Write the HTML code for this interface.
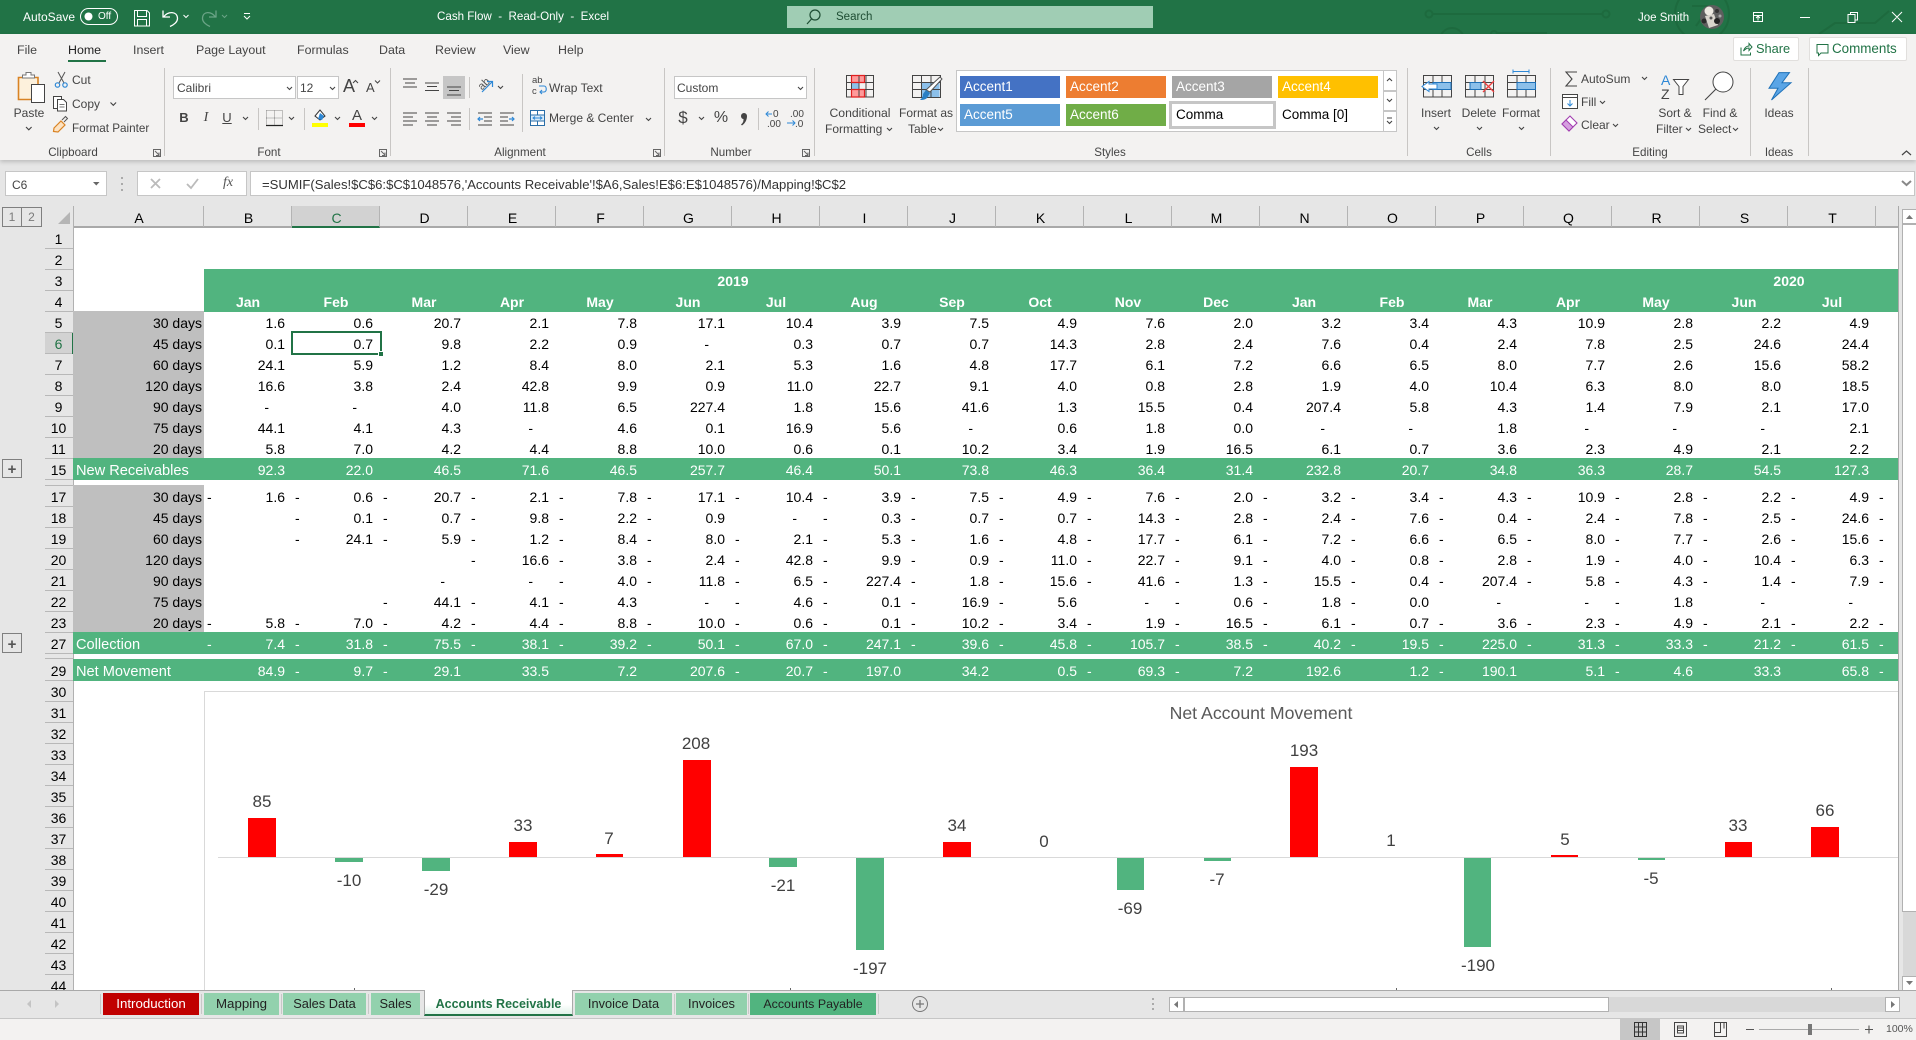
<!DOCTYPE html>
<html><head><meta charset="utf-8"><title>Cash Flow</title>
<style>
html,body{margin:0;padding:0;width:1916px;height:1040px;overflow:hidden;background:#e6e6e6;font-family:"Liberation Sans",sans-serif;font-size:12px;color:#444}
div,span{box-sizing:border-box}
.abs{position:absolute}
.t{position:absolute;white-space:nowrap;line-height:16px;color:#444}
.c{transform:translateX(-50%)}
.tb{color:#fff}
.r{position:absolute;left:204px;width:1694px;height:21px;display:grid;grid-template-columns:repeat(20,88px);overflow:hidden;font-size:14px;color:#000}
.r u{display:block;position:relative;text-decoration:none;text-align:right;padding-right:7px;line-height:24px;height:21px}
.r i{position:absolute;left:3px;top:0;font-style:normal}
.r u.z{padding-right:23px}
.r.g{background:#51b47f;color:#fff;height:22px}
.a{position:absolute;left:73px;width:131px;height:21px;font-size:14px;line-height:24px;text-align:right;padding-right:2px;color:#000;background:#bfbfbf}
.a.g{background:#51b47f;color:#fff;text-align:left;padding-left:3px;height:22px;font-size:14.6px;line-height:26px;overflow:hidden}
.n{position:absolute;left:45px;width:28px;height:21px;font-size:14px;line-height:22px;text-align:center;color:#000;border-bottom:1px solid #b8b8b8;background:#e6e6e6;padding-right:1px}
.m{position:absolute;top:290px;width:88px;text-align:center;color:#fff;font-weight:bold;font-size:14px;line-height:24px}
.ch{position:absolute;top:206px;height:21px;width:88px;text-align:center;font-size:14px;line-height:24px;color:#000;border-right:1px solid #b4b4b4;padding-left:2px}
.sw{position:absolute;height:22px;color:#fff;font-size:13.5px;line-height:22px;padding-left:4px}
.tab{position:absolute;top:993px;height:22px;background:#92d1ad;color:#222;text-align:center;line-height:22px;font-size:12.8px}
</style></head><body>

<!-- title bar -->
<div class="abs" style="left:0;top:0;width:1916px;height:34px;background:#217346"></div>
<svg class="abs" style="left:0;top:0" width="1916" height="34" viewBox="0 0 1916 34">
<g fill="none" stroke="#1d6a3e" stroke-width="2">
<circle cx="1429" cy="14" r="3.500"/><path d="M1433 14H1602"/><circle cx="1606" cy="14" r="3.500"/><circle cx="1702" cy="14" r="27"/><path d="M1692 6h18l-14 20"/><circle cx="1452" cy="40" r="12"/><circle cx="1494" cy="34" r="3"/><path d="M1497 33h50M1819 34l16-11h40l14-12"/>
</g>
</svg>
<!-- ribbon -->
<div class="abs" style="left:0;top:34px;width:1916px;height:126px;background:#f3f2f1;box-shadow:0 2px 4px rgba(0,0,0,.18)"></div>
<div class="abs" style="left:787px;top:6px;width:366px;height:22px;background:#a0cdb4"></div>

<div class="t tb" style="left:23px;top:9px;font-size:12px">AutoSave</div>
<div class="t tb" style="left:98px;top:9px;font-size:10px">Off</div>
<div class="t tb" style="left:437px;top:9px;font-size:11.6px">Cash Flow&nbsp; -&nbsp; Read-Only&nbsp; -&nbsp; Excel</div>
<div class="t" style="left:836px;top:9px;color:#1e4d33;font-size:11.5px">Search</div>
<div class="t tb" style="left:1638px;top:10px;font-size:11.5px">Joe Smith</div>

<!-- tabs -->
<div class="t" style="left:17px;top:42px;font-size:12.4px">File</div>
<div class="t" style="left:68px;top:42px;font-size:12.4px;color:#222">Home</div>
<div class="abs" style="left:68px;top:60px;width:38px;height:2px;background:#217346"></div>
<div class="t" style="left:133px;top:42px;font-size:12.4px">Insert</div>
<div class="t" style="left:196px;top:42px;font-size:12.4px">Page Layout</div>
<div class="t" style="left:297px;top:42px;font-size:12.4px">Formulas</div>
<div class="t" style="left:379px;top:42px;font-size:12.4px">Data</div>
<div class="t" style="left:435px;top:42px;font-size:12.4px">Review</div>
<div class="t" style="left:503px;top:42px;font-size:12.4px">View</div>
<div class="t" style="left:558px;top:42px;font-size:12.4px">Help</div>

<div class="abs" style="left:1733px;top:37px;width:66px;height:24px;background:#fff;border:1px solid #e1dfdd;border-radius:2px"></div>
<div class="t" style="left:1756px;top:41px;color:#217346;font-size:12.8px">Share</div>
<div class="abs" style="left:1809px;top:37px;width:98px;height:24px;background:#fff;border:1px solid #e1dfdd;border-radius:2px"></div>
<div class="t" style="left:1832px;top:41px;color:#217346;font-size:13.4px">Comments</div>

<!-- group labels -->
<div class="t c" style="left:73px;top:145px;font-size:11.6px">Clipboard</div>
<div class="t c" style="left:269px;top:145px;font-size:11.6px">Font</div>
<div class="t c" style="left:520px;top:145px;font-size:11.6px">Alignment</div>
<div class="t c" style="left:731px;top:145px;font-size:11.6px">Number</div>
<div class="t c" style="left:1110px;top:145px;font-size:11.6px">Styles</div>
<div class="t c" style="left:1479px;top:145px;font-size:11.6px">Cells</div>
<div class="t c" style="left:1650px;top:145px;font-size:11.6px">Editing</div>
<div class="t c" style="left:1779px;top:145px;font-size:11.6px">Ideas</div>

<!-- clipboard -->
<div class="t c" style="left:29px;top:105px">Paste</div>
<div class="t" style="left:72px;top:72px">Cut</div>
<div class="t" style="left:72px;top:96px">Copy</div>
<div class="t" style="left:72px;top:121px;font-size:11.7px">Format Painter</div>

<!-- font group -->
<div class="abs" style="left:173px;top:76px;width:123px;height:23px;background:#fff;border:1px solid #c6c6c6"></div>
<div class="abs" style="left:297px;top:76px;width:42px;height:23px;background:#fff;border:1px solid #c6c6c6"></div>
<div class="t" style="left:177px;top:80px">Calibri</div>
<div class="t" style="left:300px;top:80px">12</div>
<div class="t" style="left:343px;top:76px;font-size:18px;line-height:20px">A</div>
<div class="t" style="left:366px;top:78px;font-size:13px;line-height:20px">A</div>
<div class="t c" style="left:184px;top:110px;font-weight:bold;font-size:13px">B</div>
<div class="t c" style="left:206px;top:110px;font-style:italic;font-family:'Liberation Serif',serif;font-size:14px">I</div>
<div class="t c" style="left:227px;top:110px;text-decoration:underline;font-size:13px">U</div>
<div class="t c" style="left:357px;top:108px;font-size:15px">A</div>

<!-- alignment -->
<div class="abs" style="left:443px;top:76px;width:22px;height:23px;background:#c6c6c6"></div>
<div class="t" style="left:549px;top:80px">Wrap Text</div>
<div class="t" style="left:549px;top:110px">Merge &amp; Center</div>

<!-- number -->
<div class="abs" style="left:674px;top:76px;width:133px;height:23px;background:#fff;border:1px solid #c6c6c6"></div>
<div class="t" style="left:677px;top:80px">Custom</div>
<div class="t c" style="left:683px;top:109px;font-size:17px;line-height:18px">$</div>
<div class="t c" style="left:721px;top:109px;font-size:16px;line-height:18px">%</div>

<!-- styles button text -->
<div class="t c" style="left:860px;top:105px;font-size:12.2px">Conditional</div>
<div class="t" style="left:825px;top:121px">Formatting</div>
<div class="t c" style="left:926px;top:105px">Format as</div>
<div class="t" style="left:908px;top:121px">Table</div>

<div class="abs" style="left:956px;top:70px;width:441px;height:62px;background:#fff;border:1px solid #c6c6c6"></div>
<div class="sw" style="left:960px;top:76px;width:100px;background:#4472c4">Accent1</div>
<div class="sw" style="left:1066px;top:76px;width:100px;background:#ed7d31">Accent2</div>
<div class="sw" style="left:1172px;top:76px;width:100px;background:#a5a5a5">Accent3</div>
<div class="sw" style="left:1278px;top:76px;width:100px;background:#ffc000">Accent4</div>
<div class="sw" style="left:960px;top:104px;width:100px;background:#5b9bd5">Accent5</div>
<div class="sw" style="left:1066px;top:104px;width:100px;background:#70ad47">Accent6</div>
<div class="abs" style="left:1169px;top:101px;width:107px;height:28px;background:#fff;border:3px solid #c6c6c6"></div>
<div class="sw" style="left:1172px;top:104px;color:#000">Comma</div>
<div class="sw" style="left:1278px;top:104px;color:#000">Comma [0]</div>
<div class="abs" style="left:1383px;top:70px;width:14px;height:21px;background:#fff;border:1px solid #c6c6c6"></div>
<div class="abs" style="left:1383px;top:91px;width:14px;height:20px;background:#fff;border:1px solid #c6c6c6"></div>
<div class="abs" style="left:1383px;top:111px;width:14px;height:21px;background:#fff;border:1px solid #c6c6c6"></div>

<!-- cells -->
<div class="t c" style="left:1436px;top:105px">Insert</div>
<div class="t c" style="left:1479px;top:105px">Delete</div>
<div class="t c" style="left:1521px;top:105px">Format</div>
<!-- editing -->
<div class="t" style="left:1581px;top:71px">AutoSum</div>
<div class="t" style="left:1581px;top:94px">Fill</div>
<div class="t" style="left:1581px;top:117px">Clear</div>
<div class="t c" style="left:1675px;top:105px">Sort &amp;</div>
<div class="t" style="left:1656px;top:121px">Filter</div>
<div class="t c" style="left:1720px;top:105px">Find &amp;</div>
<div class="t" style="left:1698px;top:121px">Select</div>
<div class="t c" style="left:1779px;top:105px">Ideas</div>

<!-- formula bar -->
<div class="abs" style="left:5px;top:171px;width:102px;height:25px;background:#fff;border:1px solid #c6c6c6"></div>
<div class="t" style="left:12px;top:177px;font-size:12px">C6</div>
<div class="abs" style="left:137px;top:171px;width:110px;height:25px;background:#fff;border:1px solid #c6c6c6"></div>
<div class="abs" style="left:250px;top:171px;width:1665px;height:25px;background:#fff;border:1px solid #c6c6c6"></div>
<div class="t" style="left:262px;top:177px;color:#333;font-size:13.1px">=SUMIF(Sales!$C$6:$C$1048576,'Accounts Receivable'!$A6,Sales!E$6:E$1048576)/Mapping!$C$2</div>
<div class="t c" style="left:228px;top:175px;font-family:'Liberation Serif',serif;font-style:italic;font-size:14px;color:#555">fx</div>

<!-- outline buttons -->
<div class="abs" style="left:2px;top:207px;width:20px;height:20px;border:1px solid #7f7f7f;text-align:center;line-height:19px;color:#7a7a7a;font-size:12px">1</div>
<div class="abs" style="left:22px;top:207px;width:20px;height:20px;border:1px solid #7f7f7f;border-left:0;text-align:center;line-height:19px;color:#7a7a7a;font-size:12px">2</div>
<div class="abs" style="left:2px;top:459px;width:20px;height:19px;border:1px solid #7f7f7f;text-align:center;line-height:20px;color:#555;font-size:15px;font-weight:bold;overflow:hidden">+</div>
<div class="abs" style="left:2px;top:633px;width:20px;height:20px;border:1px solid #7f7f7f;text-align:center;line-height:21px;color:#555;font-size:15px;font-weight:bold;overflow:hidden">+</div>

<!-- sheet -->
<div class="abs" style="left:73px;top:227px;width:1825px;height:763px;background:#fff"></div>
<div class="abs" style="left:73px;top:206px;width:1825px;height:21px;background:#e6e6e6"></div>
<div class="abs" style="left:73px;top:226px;width:1826px;height:2px;background:#a9a9a9"></div>
<div class="abs" style="left:73px;top:206px;width:1px;height:784px;background:#b1b1b1"></div>
<div class="abs" style="left:1898px;top:206px;width:1px;height:784px;background:#a9a9a9"></div>

<!-- column headers -->
<div class="ch" style="left:73px;width:131px">A</div>
<div class="ch" style="left:204px">B</div>
<div class="ch" style="left:292px;background:#d2d2d2;color:#217346;border-bottom:2px solid #217346;height:22px">C</div>
<div class="ch" style="left:380px">D</div>
<div class="ch" style="left:468px">E</div>
<div class="ch" style="left:556px">F</div>
<div class="ch" style="left:644px">G</div>
<div class="ch" style="left:732px">H</div>
<div class="ch" style="left:820px">I</div>
<div class="ch" style="left:908px">J</div>
<div class="ch" style="left:996px">K</div>
<div class="ch" style="left:1084px">L</div>
<div class="ch" style="left:1172px">M</div>
<div class="ch" style="left:1260px">N</div>
<div class="ch" style="left:1348px">O</div>
<div class="ch" style="left:1436px">P</div>
<div class="ch" style="left:1524px">Q</div>
<div class="ch" style="left:1612px">R</div>
<div class="ch" style="left:1700px">S</div>
<div class="ch" style="left:1788px">T</div>

<!-- row numbers -->
<div class="n" style="top:228px">1</div><div class="n" style="top:249px">2</div><div class="n" style="top:270px">3</div><div class="n" style="top:291px">4</div><div class="n" style="top:312px">5</div>
<div class="n" style="top:333px;background:#d2d2d2;color:#217346">6</div>
<div class="n" style="top:354px">7</div><div class="n" style="top:375px">8</div><div class="n" style="top:396px">9</div><div class="n" style="top:417px">10</div><div class="n" style="top:438px">11</div>
<div class="n" style="top:459px">15</div>
<div class="n" style="top:480px;height:6px"></div>
<div class="n" style="top:486px">17</div><div class="n" style="top:507px">18</div><div class="n" style="top:528px">19</div><div class="n" style="top:549px">20</div><div class="n" style="top:570px">21</div><div class="n" style="top:591px">22</div><div class="n" style="top:612px">23</div>
<div class="n" style="top:633px">27</div>
<div class="n" style="top:654px;height:5px"></div>
<div class="n" style="top:660px">29</div>
<div class="n" style="top:681px">30</div><div class="n" style="top:702px">31</div><div class="n" style="top:723px">32</div><div class="n" style="top:744px">33</div><div class="n" style="top:765px">34</div><div class="n" style="top:786px">35</div><div class="n" style="top:807px">36</div><div class="n" style="top:828px">37</div><div class="n" style="top:849px">38</div><div class="n" style="top:870px">39</div><div class="n" style="top:891px">40</div><div class="n" style="top:912px">41</div><div class="n" style="top:933px">42</div><div class="n" style="top:954px">43</div><div class="n" style="top:975px;height:15px;overflow:hidden;border:0">44</div>
<div class="abs" style="left:72px;top:333px;width:2px;height:21px;background:#217346"></div>

<!-- header band -->
<div class="abs" style="left:204px;top:269px;width:1694px;height:43px;background:#51b47f"></div>
<div class="m" style="left:689px;top:269px">2019</div>
<div class="m" style="left:1745px;top:269px">2020</div>
<div class="m" style="left:204px">Jan</div><div class="m" style="left:292px">Feb</div><div class="m" style="left:380px">Mar</div><div class="m" style="left:468px">Apr</div><div class="m" style="left:556px">May</div><div class="m" style="left:644px">Jun</div><div class="m" style="left:732px">Jul</div><div class="m" style="left:820px">Aug</div><div class="m" style="left:908px">Sep</div><div class="m" style="left:996px">Oct</div><div class="m" style="left:1084px">Nov</div><div class="m" style="left:1172px">Dec</div><div class="m" style="left:1260px">Jan</div><div class="m" style="left:1348px">Feb</div><div class="m" style="left:1436px">Mar</div><div class="m" style="left:1524px">Apr</div><div class="m" style="left:1612px">May</div><div class="m" style="left:1700px">Jun</div><div class="m" style="left:1788px">Jul</div>

<!-- section 1 -->
<div class="a" style="top:311px">30 days</div><div class="a" style="top:332px">45 days</div><div class="a" style="top:353px">60 days</div><div class="a" style="top:374px">120 days</div><div class="a" style="top:395px">90 days</div><div class="a" style="top:416px">75 days</div><div class="a" style="top:437px">20 days</div>
<div class="r" style="top:311px"><u>1.6</u><u>0.6</u><u>20.7</u><u>2.1</u><u>7.8</u><u>17.1</u><u>10.4</u><u>3.9</u><u>7.5</u><u>4.9</u><u>7.6</u><u>2.0</u><u>3.2</u><u>3.4</u><u>4.3</u><u>10.9</u><u>2.8</u><u>2.2</u><u>4.9</u></div>
<div class="r" style="top:332px"><u>0.1</u><u>0.7</u><u>9.8</u><u>2.2</u><u>0.9</u><u class="z">-</u><u>0.3</u><u>0.7</u><u>0.7</u><u>14.3</u><u>2.8</u><u>2.4</u><u>7.6</u><u>0.4</u><u>2.4</u><u>7.8</u><u>2.5</u><u>24.6</u><u>24.4</u></div>
<div class="r" style="top:353px"><u>24.1</u><u>5.9</u><u>1.2</u><u>8.4</u><u>8.0</u><u>2.1</u><u>5.3</u><u>1.6</u><u>4.8</u><u>17.7</u><u>6.1</u><u>7.2</u><u>6.6</u><u>6.5</u><u>8.0</u><u>7.7</u><u>2.6</u><u>15.6</u><u>58.2</u></div>
<div class="r" style="top:374px"><u>16.6</u><u>3.8</u><u>2.4</u><u>42.8</u><u>9.9</u><u>0.9</u><u>11.0</u><u>22.7</u><u>9.1</u><u>4.0</u><u>0.8</u><u>2.8</u><u>1.9</u><u>4.0</u><u>10.4</u><u>6.3</u><u>8.0</u><u>8.0</u><u>18.5</u></div>
<div class="r" style="top:395px"><u class="z">-</u><u class="z">-</u><u>4.0</u><u>11.8</u><u>6.5</u><u>227.4</u><u>1.8</u><u>15.6</u><u>41.6</u><u>1.3</u><u>15.5</u><u>0.4</u><u>207.4</u><u>5.8</u><u>4.3</u><u>1.4</u><u>7.9</u><u>2.1</u><u>17.0</u></div>
<div class="r" style="top:416px"><u>44.1</u><u>4.1</u><u>4.3</u><u class="z">-</u><u>4.6</u><u>0.1</u><u>16.9</u><u>5.6</u><u class="z">-</u><u>0.6</u><u>1.8</u><u>0.0</u><u class="z">-</u><u class="z">-</u><u>1.8</u><u class="z">-</u><u class="z">-</u><u class="z">-</u><u>2.1</u></div>
<div class="r" style="top:437px"><u>5.8</u><u>7.0</u><u>4.2</u><u>4.4</u><u>8.8</u><u>10.0</u><u>0.6</u><u>0.1</u><u>10.2</u><u>3.4</u><u>1.9</u><u>16.5</u><u>6.1</u><u>0.7</u><u>3.6</u><u>2.3</u><u>4.9</u><u>2.1</u><u>2.2</u></div>

<div class="a g" style="top:458px">New Receivables</div>
<div class="r g" style="top:458px"><u>92.3</u><u>22.0</u><u>46.5</u><u>71.6</u><u>46.5</u><u>257.7</u><u>46.4</u><u>50.1</u><u>73.8</u><u>46.3</u><u>36.4</u><u>31.4</u><u>232.8</u><u>20.7</u><u>34.8</u><u>36.3</u><u>28.7</u><u>54.5</u><u>127.3</u></div>

<!-- section 2 -->
<div class="a" style="top:485px">30 days</div><div class="a" style="top:506px">45 days</div><div class="a" style="top:527px">60 days</div><div class="a" style="top:548px">120 days</div><div class="a" style="top:569px">90 days</div><div class="a" style="top:590px">75 days</div><div class="a" style="top:611px">20 days</div>
<div class="r" style="top:485px"><u><i>-</i>1.6</u><u><i>-</i>0.6</u><u><i>-</i>20.7</u><u><i>-</i>2.1</u><u><i>-</i>7.8</u><u><i>-</i>17.1</u><u><i>-</i>10.4</u><u><i>-</i>3.9</u><u><i>-</i>7.5</u><u><i>-</i>4.9</u><u><i>-</i>7.6</u><u><i>-</i>2.0</u><u><i>-</i>3.2</u><u><i>-</i>3.4</u><u><i>-</i>4.3</u><u><i>-</i>10.9</u><u><i>-</i>2.8</u><u><i>-</i>2.2</u><u><i>-</i>4.9</u><u><i>-</i></u></div>
<div class="r" style="top:506px"><u></u><u><i>-</i>0.1</u><u><i>-</i>0.7</u><u><i>-</i>9.8</u><u><i>-</i>2.2</u><u><i>-</i>0.9</u><u class="z">-</u><u><i>-</i>0.3</u><u><i>-</i>0.7</u><u><i>-</i>0.7</u><u><i>-</i>14.3</u><u><i>-</i>2.8</u><u><i>-</i>2.4</u><u><i>-</i>7.6</u><u><i>-</i>0.4</u><u><i>-</i>2.4</u><u><i>-</i>7.8</u><u><i>-</i>2.5</u><u><i>-</i>24.6</u><u><i>-</i></u></div>
<div class="r" style="top:527px"><u></u><u><i>-</i>24.1</u><u><i>-</i>5.9</u><u><i>-</i>1.2</u><u><i>-</i>8.4</u><u><i>-</i>8.0</u><u><i>-</i>2.1</u><u><i>-</i>5.3</u><u><i>-</i>1.6</u><u><i>-</i>4.8</u><u><i>-</i>17.7</u><u><i>-</i>6.1</u><u><i>-</i>7.2</u><u><i>-</i>6.6</u><u><i>-</i>6.5</u><u><i>-</i>8.0</u><u><i>-</i>7.7</u><u><i>-</i>2.6</u><u><i>-</i>15.6</u><u><i>-</i></u></div>
<div class="r" style="top:548px"><u></u><u></u><u></u><u><i>-</i>16.6</u><u><i>-</i>3.8</u><u><i>-</i>2.4</u><u><i>-</i>42.8</u><u><i>-</i>9.9</u><u><i>-</i>0.9</u><u><i>-</i>11.0</u><u><i>-</i>22.7</u><u><i>-</i>9.1</u><u><i>-</i>4.0</u><u><i>-</i>0.8</u><u><i>-</i>2.8</u><u><i>-</i>1.9</u><u><i>-</i>4.0</u><u><i>-</i>10.4</u><u><i>-</i>6.3</u><u><i>-</i></u></div>
<div class="r" style="top:569px"><u></u><u></u><u class="z">-</u><u class="z">-</u><u><i>-</i>4.0</u><u><i>-</i>11.8</u><u><i>-</i>6.5</u><u><i>-</i>227.4</u><u><i>-</i>1.8</u><u><i>-</i>15.6</u><u><i>-</i>41.6</u><u><i>-</i>1.3</u><u><i>-</i>15.5</u><u><i>-</i>0.4</u><u><i>-</i>207.4</u><u><i>-</i>5.8</u><u><i>-</i>4.3</u><u><i>-</i>1.4</u><u><i>-</i>7.9</u><u><i>-</i></u></div>
<div class="r" style="top:590px"><u></u><u></u><u><i>-</i>44.1</u><u><i>-</i>4.1</u><u><i>-</i>4.3</u><u class="z">-</u><u><i>-</i>4.6</u><u><i>-</i>0.1</u><u><i>-</i>16.9</u><u><i>-</i>5.6</u><u class="z">-</u><u><i>-</i>0.6</u><u><i>-</i>1.8</u><u><i>-</i>0.0</u><u class="z">-</u><u class="z">-</u><u><i>-</i>1.8</u><u class="z">-</u><u class="z">-</u></div>
<div class="r" style="top:611px"><u><i>-</i>5.8</u><u><i>-</i>7.0</u><u><i>-</i>4.2</u><u><i>-</i>4.4</u><u><i>-</i>8.8</u><u><i>-</i>10.0</u><u><i>-</i>0.6</u><u><i>-</i>0.1</u><u><i>-</i>10.2</u><u><i>-</i>3.4</u><u><i>-</i>1.9</u><u><i>-</i>16.5</u><u><i>-</i>6.1</u><u><i>-</i>0.7</u><u><i>-</i>3.6</u><u><i>-</i>2.3</u><u><i>-</i>4.9</u><u><i>-</i>2.1</u><u><i>-</i>2.2</u><u><i>-</i></u></div>

<div class="a g" style="top:632px">Collection</div>
<div class="r g" style="top:632px"><u><i>-</i>7.4</u><u><i>-</i>31.8</u><u><i>-</i>75.5</u><u><i>-</i>38.1</u><u><i>-</i>39.2</u><u><i>-</i>50.1</u><u><i>-</i>67.0</u><u><i>-</i>247.1</u><u><i>-</i>39.6</u><u><i>-</i>45.8</u><u><i>-</i>105.7</u><u><i>-</i>38.5</u><u><i>-</i>40.2</u><u><i>-</i>19.5</u><u><i>-</i>225.0</u><u><i>-</i>31.3</u><u><i>-</i>33.3</u><u><i>-</i>21.2</u><u><i>-</i>61.5</u><u><i>-</i></u></div>
<div class="a g" style="top:659px">Net Movement</div>
<div class="r g" style="top:659px"><u>84.9</u><u><i>-</i>9.7</u><u><i>-</i>29.1</u><u>33.5</u><u>7.2</u><u>207.6</u><u><i>-</i>20.7</u><u><i>-</i>197.0</u><u>34.2</u><u>0.5</u><u><i>-</i>69.3</u><u><i>-</i>7.2</u><u>192.6</u><u>1.2</u><u><i>-</i>190.1</u><u>5.1</u><u><i>-</i>4.6</u><u>33.3</u><u>65.8</u><u><i>-</i></u></div>

<!-- selection -->
<div class="abs" style="left:291px;top:331px;width:91px;height:24px;border:2px solid #217346"></div>
<div class="abs" style="left:378px;top:351px;width:6px;height:6px;background:#217346;border:1px solid #fff"></div>

<!-- chart -->
<div class="abs" style="left:204px;top:691px;width:1694px;height:299px;border-left:1px solid #d9d9d9;border-top:1px solid #d9d9d9;background:#fff"></div>
<svg class="abs" style="left:0;top:0" width="1916" height="1040" viewBox="0 0 1916 1040" font-family="'Liberation Sans',sans-serif">
<g fill="#404040" font-size="17" text-anchor="middle">
<text x="1261" y="719" font-size="17.7" fill="#595959">Net Account Movement</text>
<text x="262" y="807">85</text><text x="349" y="886">-10</text><text x="436" y="895">-29</text><text x="523" y="831">33</text><text x="609" y="844">7</text><text x="696" y="749">208</text><text x="783" y="891">-21</text><text x="870" y="974">-197</text><text x="957" y="831">34</text><text x="1044" y="847">0</text><text x="1130" y="914">-69</text><text x="1217" y="885">-7</text><text x="1304" y="756">193</text><text x="1391" y="846">1</text><text x="1478" y="971">-190</text><text x="1565" y="845">5</text><text x="1651" y="884">-5</text><text x="1738" y="831">33</text><text x="1825" y="816">66</text>
</g>
<rect x="218" y="857" width="1680" height="1" fill="#d9d9d9"/>
<g fill="#ff0000">
<rect x="248" y="818" width="28" height="39"/><rect x="509" y="842" width="28" height="15"/><rect x="596" y="854" width="27" height="3"/><rect x="683" y="760" width="28" height="97"/><rect x="943" y="842" width="28" height="15"/><rect x="1290" y="767" width="28" height="90"/><rect x="1551" y="855" width="27" height="2"/><rect x="1725" y="842" width="27" height="15"/><rect x="1811" y="827" width="28" height="30"/>
</g>
<g fill="#51b47f">
<rect x="335" y="858" width="28" height="4"/><rect x="422" y="858" width="28" height="13"/><rect x="769" y="858" width="28" height="9"/><rect x="856" y="858" width="28" height="92"/><rect x="1117" y="858" width="27" height="32"/><rect x="1204" y="858" width="27" height="3"/><rect x="1464" y="858" width="27" height="89"/><rect x="1638" y="858" width="27" height="2"/>
</g>
<g fill="#666"><rect x="354" y="988" width="1" height="2"/><rect x="790" y="988" width="1" height="2"/><rect x="1396" y="988" width="1" height="2"/><rect x="1831" y="988" width="1" height="2"/></g>

<!-- avatar -->
<circle cx="1712" cy="17" r="12" fill="#5e5e5e"/><circle cx="1709" cy="11" r="4.500" fill="#ece8e0"/><path d="M1705 16l9-2 4 11-9 3z" fill="#d8d4cc"/><circle cx="1717" cy="21" r="3" fill="#222"/><circle cx="1704" cy="21" r="2.500" fill="#2a2a2a"/><circle cx="1717" cy="11" r="2" fill="#333"/><circle cx="1711" cy="18" r="1.500" fill="#555"/><circle cx="1720" cy="16" r="1.500" fill="#aaa"/>
<g fill="none" stroke="#fff" stroke-width="1">
<rect x="80.500" y="8.500" width="37" height="16" rx="8"/>
<path d="M134.500 10.500h12.500l2.500 2.500v13h-15zM137.500 10.500v6h9v-6M137.500 25.500v-6h9v6"/>
<path d="M163 10.500v6.500h7M163.500 17C168 11 177 11 177.500 18c.3 4-4 7-7.500 8.500" stroke-width="1.300"/>
<path d="M183.500 15l2.500 2.500 2.500-2.500M244 13.500h6M244 16l3 3 3-3"/>
<path d="M1753.500 12.500h9v9h-9zM1753.500 15.500h9M1758 20.500v-4M1756 18l2-2 2 2M1800 17.500h10M1848 14.500v8h7v-8zM1850.500 14.500v-2h7v7.500h-2M1892 12l10 10M1902 12l-10 10"/>
</g>
<circle cx="88.500" cy="16.500" r="4" fill="#fff"/>
<g fill="none" stroke="#6aa486" stroke-width="1.300"><path d="M216 10.500v6.500h-7M215.500 17C211 11 203 11 202.500 18c-.3 4 4 7 7.500 8.500"/><path stroke-width="1" d="M222 15l2.500 2.500 2.500-2.500"/></g>
<g fill="none" stroke="#1e4d33" stroke-width="1.200"><circle cx="815" cy="15" r="5"/><path d="M811.500 19l-4.500 5"/></g>

<!-- share/comments -->
<g fill="none" stroke="#217346" stroke-width="1"><path d="M1741 47.500v7.500h9.500v-2.500M1743.500 51c.7-3 3-5 5.500-5v-2.500l3 3.500-3 3.500v-2.500c-2 0-3.500.7-5.500 3z"/><path d="M1817 44.500h11v8.500h-7l-2.500 2.500V53h-1.500z"/></g>

<!-- separators -->
<g fill="#c8c6c4"><rect x="164" y="68" width="1" height="88"/><rect x="390" y="68" width="1" height="88"/><rect x="664" y="68" width="1" height="88"/><rect x="814" y="68" width="1" height="88"/><rect x="1407" y="68" width="1" height="88"/><rect x="1550" y="68" width="1" height="88"/><rect x="1750" y="68" width="1" height="88"/><rect x="1808" y="68" width="1" height="88"/><rect x="258" y="108" width="1" height="22"/><rect x="304" y="108" width="1" height="22"/><rect x="469" y="77" width="1" height="21"/><rect x="469" y="108" width="1" height="22"/><rect x="522" y="74" width="1" height="58"/><rect x="758" y="108" width="1" height="22"/></g>

<!-- launchers -->
<g fill="none" stroke="#666" stroke-width="1"><path d="M153.500 149.500h7v7h-7zM155 151l4 4M159 152.500v3h-3M379.500 149.500h7v7h-7zM381 151l4 4M385 152.500v3h-3M653.500 149.500h7v7h-7zM655 151l4 4M659 152.500v3h-3M802.500 149.500h7v7h-7zM804 151l4 4M808 152.500v3h-3"/>
<path stroke="#444" stroke-width="1.200" d="M1902 155l4.500-4 4.500 4"/></g>

<!-- chevrons -->
<g fill="none" stroke="#444" stroke-width="1.100">
<path d="M26 127l2.800 2.800 2.800-2.800M110.500 102.500l2.800 2.800 2.800-2.800M287 87l2.500 2.500 2.500-2.500M330 87l2.500 2.500 2.500-2.500M243 117l2.500 2.500 2.500-2.500M289 117l2.500 2.500 2.500-2.500M335 117l2.500 2.500 2.500-2.500M372 117l2.500 2.500 2.500-2.500M498 86l2.500 2.500 2.500-2.500M646 118l2.500 2.500 2.500-2.500M798 87l2.500 2.500 2.500-2.500M699 117l2.500 2.500 2.500-2.500M887 128l2.500 2.500 2.500-2.500M938 128l2.500 2.500 2.500-2.500M1434 127l2.500 2.500 2.500-2.500M1477 127l2.500 2.500 2.500-2.500M1519 127l2.500 2.500 2.500-2.500M1642 77l2.500 2.500 2.500-2.500M1600 101l2.500 2.500 2.500-2.500M1613 124l2.500 2.500 2.500-2.500M1686 128l2.500 2.500 2.500-2.500M1733 128l2.500 2.500 2.500-2.500M1387 81l2.500-2.500 2.500 2.500M1387 99l2.500 2.500 2.500-2.500M1387 121l2.500 2.500 2.500-2.500M1387 118h5"/>
</g>

<!-- paste -->
<path d="M18.500 77.500h19.500v22H18.500z" fill="#fdf1dc" stroke="#d98324" stroke-width="1.600"/>
<path d="M22.500 78h12v-3h-3.500v-2.500h-5V75h-3.500z" fill="#fff" stroke="#777" stroke-width="1"/>
<rect x="31.500" y="84.500" width="13" height="18" fill="#fff" stroke="#444" stroke-width="1"/>
<!-- cut -->
<g fill="none" stroke="#555" stroke-width="1"><path d="M58 72l6 11M65 72l-6 11"/></g><g fill="none" stroke="#2e88d6" stroke-width="1.200"><circle cx="57.500" cy="85" r="2.200"/><circle cx="65" cy="85" r="2.200"/></g>
<!-- copy -->
<g fill="#fff" stroke="#444" stroke-width="1"><path d="M53.500 96.500h8v12h-8z"/><path d="M57.500 99.500h6l3 3v8.500h-9z"/><path fill="none" stroke="#777" d="M59.500 104.500h5M59.500 107h5"/></g>
<!-- format painter -->
<path d="M54 128l7-7 4 4-7 7-4.500-.5z" fill="#fde3c2" stroke="#d98324" stroke-width="1.200"/><path d="M62 120l3.500-3.500 2 2-3.500 3.500" fill="none" stroke="#555"/>
<!-- font grow/shrink -->
<g fill="none" stroke="#444"><path d="M353 83l2.500-2.500 2.500 2.500M375 80.500l2.500 2.500 2.500-2.500"/></g>
<!-- borders -->
<path d="M266.500 110.500h16v15M266.500 110.500v15M274.500 110.500v15M266.500 118h16" fill="none" stroke="#888" stroke-dasharray="1 1"/><path d="M266 125.500h17" stroke="#222" stroke-width="1.300"/>
<!-- fill -->
<path d="M315 116l5-6 5 6-5 4z" fill="#fff" stroke="#333"/><path d="M320 113l4 3-2 4-4-1z" fill="#2e88d6"/><rect x="312" y="123" width="16" height="4" fill="#ffff00"/>
<rect x="349" y="123" width="16" height="4" fill="#ff0000"/>
<!-- align top row -->
<g stroke="#444" stroke-width="1.100" fill="none">
<path d="M403 79h14M405 83h10M403 87h14M425 83h14M427 86.500h10M425 90.500h14M447 87h14M449 90.500h10M447 95h14"/>
<path d="M403 113h14M403 117h10M403 121h14M403 125h10M425 113h14M427 117h10M425 121h14M427 125h10M447 113h14M451 117h10M447 121h14M451 125h10"/>
<path d="M478 113h14M484 117h8M484 121h8M478 125h14M500 113h14M500 117h8M500 121h8M500 125h14"/>
</g>
<g stroke="#2e88d6" stroke-width="1.200" fill="none"><path d="M483 119h-5m2-2l-2 2 2 2M509 119h5m-2-2l2 2-2 2"/></g>
<!-- orientation -->
<text x="478" y="89" font-size="11" fill="#555" transform="rotate(-45 482 85)">ab</text><path d="M482 92l10-10M487 81.500h5.500v5.500" fill="none" stroke="#2e88d6" stroke-width="1.200"/>
<!-- wrap -->
<text x="532" y="83" font-size="9.500" fill="#444">ab</text><text x="532" y="94" font-size="9.500" fill="#444">c</text><path d="M540 92h4c3 0 3-6 0-6h-5m3 8l-2-2 2-2" fill="none" stroke="#2e88d6" stroke-width="1.100"/>
<!-- merge -->
<rect x="530.500" y="110.500" width="14" height="15" fill="#fff" stroke="#2a6ea8"/><path d="M531 115h13v6h-13z" fill="#d9ecfa"/><path d="M530.500 115h14M530.500 121h14M537.500 110.500v4M537.500 121.500v4" stroke="#2a6ea8" fill="none"/><path d="M533 118h9m-2-1.500l2 1.500-2 1.500M535 116.500L533 118l2 1.500" stroke="#2e88d6" fill="none"/>
<!-- comma -->
<path d="M741 116a3 3 0 1 1 6 0c0 4-2 7.500-5 9.500l-1-1c2-1.500 2.500-3 2.500-5.500-1.500 0-2.500-1.500-2.500-3z" fill="#444"/>
<!-- decimals -->
<g font-size="10" fill="#444"><text x="773" y="117">0</text><text x="767" y="127">.00</text><text x="790" y="117">.00</text><text x="795" y="127">.0</text></g>
<path d="M772 114h-6m2.500-2.500L766 114l2.500 2.500M795 123h-8m5.500-2.500L795 123l-2.500 2.500" stroke="#2e88d6" fill="none"/>
<!-- cond formatting -->
<rect x="851.500" y="75.500" width="13" height="7" fill="#ff9a9a"/><rect x="851.500" y="89.500" width="13" height="7.500" fill="#ff9a9a"/><rect x="851.500" y="82.500" width="8" height="7" fill="#8cc0ea"/>
<path d="M846.500 75.500h27v21.500h-27zM846.500 82.500h27M846.500 89.500h27M851.500 75.500v21.500M859 75.500v21.500M866 75.500v21.500" fill="none" stroke="#444"/><path d="M851.500 82.500v-7h13v7zM851.500 89.500h13v7.500h-13z" fill="none" stroke="#e02020" stroke-width="1.200"/>
<!-- format as table -->
<rect x="921.500" y="82.500" width="18" height="15" fill="#8cc0ea"/><path d="M912.500 75.500h28v22h-28zM912.500 82.500h28M912.500 89.500h28M921.500 75.500v22M931 75.500v22" fill="none" stroke="#444"/><path d="M940 77l2 2-12 13-4-2z" fill="#fff" stroke="#555"/><path d="M926 90l4 3-3 5c-2 2-5 2-7 2 2-2 3-3 3-6z" fill="#2a7fc4"/>
<!-- insert -->
<path d="M1423.500 75.500h28v21.500h-28zM1423.500 82.500h28M1423.500 89.500h28M1433 75.500v21.500M1442 75.500v21.500" fill="none" stroke="#444"/><rect x="1433" y="82.500" width="18" height="7" fill="#8cc0ea" stroke="#1e71b8"/><path d="M1437 84h-8v-2.500l-7 5 7 5V89h8z" fill="#fff" stroke="#2e88d6"/>
<!-- delete -->
<path d="M1465.500 75.500h28v21.500h-28zM1465.500 82.500h28M1465.500 89.500h28M1475 75.500v21.500M1485 75.500v21.500" fill="none" stroke="#444"/><rect x="1470" y="82.500" width="11" height="7" fill="#8cc0ea" stroke="#1e71b8"/><path d="M1483 81l11 11M1494 81l-11 11" stroke="#f04040" stroke-width="1.300" fill="none"/>
<!-- format -->
<path d="M1507.500 75.500h28v21.500h-28zM1507.500 82.500h28M1507.500 89.500h28M1517 75.500v21.500M1526 75.500v21.500" fill="none" stroke="#444"/><rect x="1517" y="82.500" width="18.500" height="7" fill="#8cc0ea" stroke="#1e71b8"/><path d="M1513 71.500h16M1513 69.500v4M1529 69.500v4" fill="none" stroke="#2e88d6"/>
<!-- sigma -->
<path d="M1577 72h-11l6 7-6 7h11" fill="none" stroke="#444" stroke-width="1.100"/>
<!-- fill -->
<rect x="1562.500" y="94.500" width="15" height="14" fill="#fff" stroke="#444"/><path d="M1562.500 97.500h15" stroke="#444"/><path d="M1570 100v6m-2.500-2.500l2.500 2.500 2.500-2.500" fill="none" stroke="#2e88d6"/>
<!-- clear -->
<path d="M1562 124l8-8 7 7-8 8z" fill="#fff" stroke="#a23fb0" stroke-width="1.100"/><path d="M1562 124l4-4 7 7-4 4z" fill="#d69fe0" stroke="#a23fb0"/>
<!-- sort & filter -->
<text x="1661" y="85" font-size="14" fill="#2e88d6">A</text><text x="1661" y="99" font-size="14" fill="#444">Z</text><path d="M1673.500 79.500h15l-5.500 7v8h-4v-8z" fill="#fff" stroke="#444"/>
<!-- find -->
<circle cx="1723" cy="82" r="10" fill="#fff" stroke="#444"/><path d="M1716 89l-11 11" stroke="#444" stroke-width="1.100"/>
<!-- ideas -->
<path d="M1779 72.600h10.500L1782 82.700h9l-19.500 17.300 6.500-11.700h-9z" fill="#5aa5e6" stroke="#1e71b8"/>

<!-- formula bar icons -->
<path d="M93 182h6.500l-3.200 3.500z" fill="#666"/>
<g fill="#aaa"><rect x="121" y="177" width="2" height="2"/><rect x="121" y="183" width="2" height="2"/><rect x="121" y="189" width="2" height="2"/></g>
<g fill="none" stroke="#bbb" stroke-width="1.800"><path d="M151 179l9 9M160 179l-9 9M187 184l4 4 7-9"/></g>
<path d="M1902 181l4.500 4 4.500-4" fill="none" stroke="#888" stroke-width="2"/>
<!-- corner -->
<path d="M58 224h12v-12z" fill="#b5b5b5"/>

<!-- vertical scrollbar -->
<rect x="1903" y="209" width="13" height="781" fill="#d8d8d8"/>
<rect x="1902.500" y="209.500" width="14" height="14" fill="#fff" stroke="#b1b1b1"/><path d="M1906 219h7l-3.500-4z" fill="#777"/>
<rect x="1902.500" y="224.500" width="14" height="687" fill="#fff" stroke="#b1b1b1"/>
<rect x="1902.500" y="976.500" width="14" height="14" fill="#fff" stroke="#b1b1b1"/><path d="M1906 981h7l-3.500 4z" fill="#777"/>
</svg>

<!-- sheet tabs -->
<div class="abs" style="left:0;top:990px;width:1916px;height:28px;background:#e6e6e6;border-top:1px solid #a9a9a9"></div>
<div class="abs" style="left:0;top:1018px;width:1916px;height:22px;background:#f3f2f1;border-top:1px solid #c6c6c6"></div>
<div class="tab" style="left:103px;width:96px;background:#c00000;color:#fff;font-size:13.3px">Introduction</div>
<div class="tab" style="left:204px;width:75px;font-size:13.3px">Mapping</div>
<div class="tab" style="left:283px;width:83px">Sales Data</div>
<div class="tab" style="left:371px;width:49px">Sales</div>
<div class="abs" style="left:424px;top:990px;width:149px;height:26px;background:linear-gradient(#fff 60%,#e0f2e8);border:1px solid #a9a9a9;border-top:0;border-bottom:2px solid #217346;color:#217346;font-weight:bold;text-align:center;line-height:29px;font-size:12.5px;white-space:nowrap">Accounts Receivable</div>
<div class="tab" style="left:575px;width:97px">Invoice Data</div>
<div class="tab" style="left:676px;width:71px">Invoices</div>
<div class="tab" style="left:750px;width:126px;background:#51b47f;font-size:12.4px">Accounts Payable</div>
<svg class="abs" style="left:0;top:990px" width="1916" height="50" viewBox="0 990 1916 50">
<g fill="#c8c8c8"><rect x="100" y="994" width="1" height="20"/><rect x="201" y="994" width="1" height="20"/><rect x="281" y="994" width="1" height="20"/><rect x="368" y="994" width="1" height="20"/><rect x="674" y="994" width="1" height="20"/><rect x="748" y="994" width="1" height="20"/><rect x="878" y="994" width="1" height="20"/></g>
<path d="M31 1000l-4 4 4 4zM55 1000l4 4-4 4z" fill="#c4c4c4"/>
<circle cx="920" cy="1004" r="7.500" fill="none" stroke="#777"/><path d="M916 1004h8M920 1000v8" stroke="#777" stroke-width="1.300"/>
<g fill="#aaa"><rect x="1152" y="998" width="2" height="2"/><rect x="1152" y="1003" width="2" height="2"/><rect x="1152" y="1008" width="2" height="2"/></g>
<rect x="1169" y="997" width="731" height="15" fill="#d8d8d8"/>
<rect x="1169.500" y="997.500" width="14" height="14" fill="#fff" stroke="#b1b1b1"/><path d="M1178 1001v7l-4-3.500z" fill="#777"/>
<rect x="1184.500" y="997.500" width="424" height="14" fill="#fff" stroke="#b1b1b1"/>
<rect x="1885.500" y="997.500" width="14" height="14" fill="#fff" stroke="#b1b1b1"/><path d="M1891 1001v7l4-3.500z" fill="#777"/>
<rect x="1620" y="1019" width="40" height="21" fill="#c6c6c6"/>
<path d="M1634.500 1022.500h12v14h-12zM1634.500 1027h12M1634.500 1032h12M1638.500 1022.500v14M1642.500 1022.500v14" fill="none" stroke="#333"/>
<path d="M1674.500 1022.500h12v14h-12zM1677.500 1026h6v7h-6zM1678 1028h5M1678 1030.500h5" fill="none" stroke="#444"/>
<path d="M1714.500 1022.500h12v14h-12zM1714.500 1032.500h6v-10M1724 1022.500v6" fill="none" stroke="#444"/>
<path d="M1746 1029.500h8M1865 1029.500h8M1869 1025.500v8" stroke="#555" stroke-width="1.100"/>
<rect x="1759" y="1029" width="100" height="1" fill="#aaa"/><rect x="1808" y="1024" width="4" height="11" fill="#777"/>
</svg>
<div class="t" style="left:1886px;top:1021px;font-size:10.500px;color:#555">100%</div>
</body></html>
